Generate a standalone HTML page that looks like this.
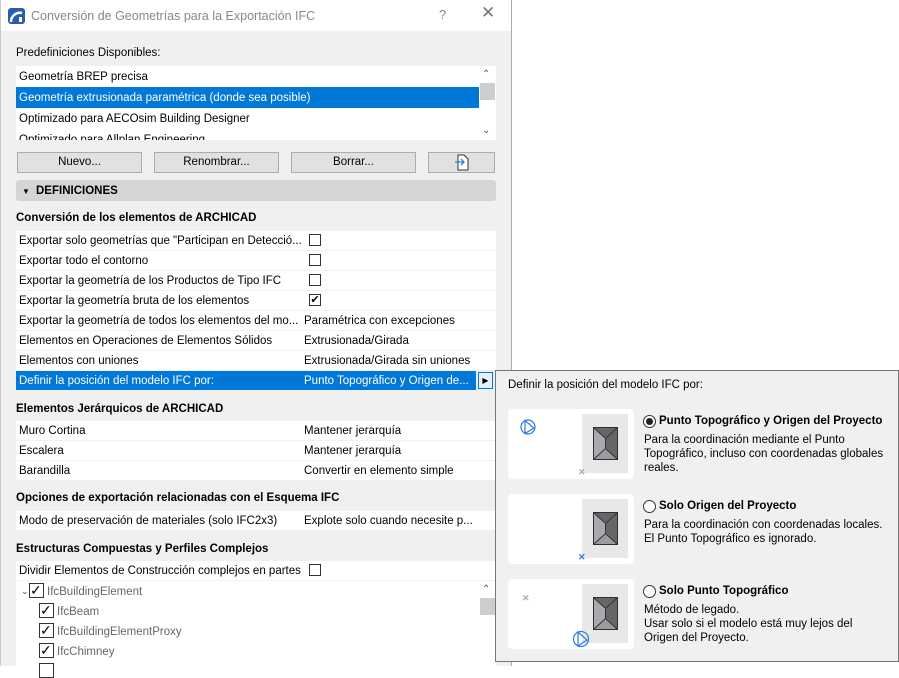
<!DOCTYPE html>
<html><head><meta charset="utf-8"><style>
*{margin:0;padding:0;box-sizing:border-box}
html,body{width:899px;height:666px}
body{background:#fff;font-family:"Liberation Sans",sans-serif;font-size:11.5px;color:#000;position:relative;overflow:hidden}
.a{position:absolute}
.dlg{left:0;top:0;width:512px;height:666px;background:#f0f0f0;border-right:1px solid #aaa;border-left:1px solid #ccc}
.t{position:absolute;white-space:nowrap;line-height:14px}
.b{font-weight:bold}
.row{position:absolute;left:16px;width:480px;height:20px;background:#fff;border-bottom:1px solid #f0f0f0}
.row span{position:absolute;top:4px;white-space:nowrap}
.row .v{left:288px}
.row .l{left:3px}
.cb{position:absolute;width:12px;height:12px;border:1px solid #333;background:#fff}
.btn{position:absolute;top:152px;height:21px;background:#e1e1e1;border:1px solid #adadad;text-align:center;line-height:19px}
.card{position:absolute;left:508px;width:126px;height:70px;background:#fff;border-radius:4px}
.gb{position:absolute;left:74px;top:5px;width:46px;height:59px;background:#e8e8e8}
.rad{position:absolute;width:13px;height:13px;border:1px solid #333;border-radius:50%;background:#fff}
.ifc{color:#666}
</style></head><body>
<div class="a dlg"></div>
<div class="a" style="left:1px;top:0;width:510px;height:31px;background:#fff"></div>
<svg class="a" style="left:8px;top:8px" width="17" height="16"><rect width="17" height="16" rx="3" fill="#2a5db0"/><path d="M3 14 A9 9 0 0 1 14 5" stroke="#fff" stroke-width="2.5" fill="none"/><rect x="11" y="9" width="3" height="5" fill="#fff"/></svg>
<div class="t" style="left:31px;top:9px;font-size:12.5px;color:#888">Conversión de Geometrías para la Exportación IFC</div>
<div class="t" style="left:439px;top:8px;font-size:13px;color:#888">?</div>
<div class="t" style="left:481px;top:6px;font-size:17px;color:#777">✕</div>
<div class="t" style="left:16px;top:46px">Predefiniciones Disponibles:</div>
<div class="a" style="left:16px;top:66px;width:480px;height:74px;background:#fff;overflow:hidden">
<div class="t" style="left:3px;top:4px">Geometría BREP precisa</div>
<div class="a" style="left:0;top:21px;width:463px;height:21px;background:#0078d7"></div>
<div class="t" style="left:3px;top:25px;color:#fff">Geometría extrusionada paramétrica (donde sea posible)</div>
<div class="t" style="left:3px;top:46px">Optimizado para AECOsim Building Designer</div>
<div class="t" style="left:3px;top:67px">Optimizado para Allplan Engineering</div>
<div class="a" style="left:464px;top:17px;width:15px;height:17px;background:#cdcdcd"></div>
<div class="t" style="left:466px;top:2px;font-size:10px;color:#555">⌃</div>
<div class="t" style="left:466px;top:58px;font-size:10px;color:#555">⌄</div>
</div>
<div class="btn" style="left:17px;width:125px">Nuevo...</div>
<div class="btn" style="left:154px;width:125px">Renombrar...</div>
<div class="btn" style="left:291px;width:125px">Borrar...</div>
<div class="btn" style="left:428px;width:67px"><svg width="16" height="17" style="margin-top:1px"><path d="M4 1h6l4 4v11H4z" fill="#fff" stroke="#333"/><path d="M1 8h9M7 5l3 3-3 3" stroke="#2a7de1" stroke-width="1.3" fill="none"/></svg></div>
<div class="a" style="left:16px;top:180px;width:480px;height:21px;background:#d5d5d5;border-radius:3px"></div>
<div class="t b" style="left:22px;top:185px;font-size:8px">▼</div>
<div class="t b" style="left:36px;top:184px">DEFINICIONES</div>
<div class="t b" style="left:16px;top:211px">Conversión de los elementos de ARCHICAD</div>
<div class="row" style="top:231px"><span class="l">Exportar solo geometrías que "Participan en Detecció...</span><div class="cb" style="left:293px;top:3px"></div></div>
<div class="row" style="top:251px"><span class="l">Exportar todo el contorno</span><div class="cb" style="left:293px;top:3px"></div></div>
<div class="row" style="top:271px"><span class="l">Exportar la geometría de los Productos de Tipo IFC</span><div class="cb" style="left:293px;top:3px"></div></div>
<div class="row" style="top:291px"><span class="l">Exportar la geometría bruta de los elementos</span><div class="cb" style="left:293px;top:3px;font-size:11px;line-height:10px;text-align:center">✔</div></div>
<div class="row" style="top:311px"><span class="l">Exportar la geometría de todos los elementos del mo...</span><span class="v">Paramétrica con excepciones</span></div>
<div class="row" style="top:331px"><span class="l">Elementos en Operaciones de Elementos Sólidos</span><span class="v">Extrusionada/Girada</span></div>
<div class="row" style="top:351px"><span class="l">Elementos con uniones</span><span class="v">Extrusionada/Girada sin uniones</span></div>
<div class="row" style="top:371px;background:#0078d7;width:460px;color:#fff"><span class="l">Definir la posición del modelo IFC por:</span><span class="v">Punto Topográfico y Origen de...</span></div>
<div class="a" style="left:478px;top:372px;width:15px;height:17px;background:#e5f1fb;border:1px solid #0078d7;font-size:8px;line-height:15px;text-align:center">▶</div>
<div class="t b" style="left:16px;top:402px">Elementos Jerárquicos de ARCHICAD</div>
<div class="row" style="top:421px"><span class="l">Muro Cortina</span><span class="v">Mantener jerarquía</span></div>
<div class="row" style="top:441px"><span class="l">Escalera</span><span class="v">Mantener jerarquía</span></div>
<div class="row" style="top:461px"><span class="l">Barandilla</span><span class="v">Convertir en elemento simple</span></div>
<div class="t b" style="left:16px;top:491px">Opciones de exportación relacionadas con el Esquema IFC</div>
<div class="row" style="top:511px"><span class="l">Modo de preservación de materiales (solo IFC2x3)</span><span class="v">Explote solo cuando necesite p...</span></div>
<div class="t b" style="left:16px;top:542px">Estructuras Compuestas y Perfiles Complejos</div>
<div class="row" style="top:561px"><span class="l">Dividir Elementos de Construcción complejos en partes</span><div class="cb" style="left:293px;top:3px"></div></div>
<div class="a" style="left:16px;top:581px;width:480px;height:85px;background:#fff"></div>
<div class="a" style="left:480px;top:598px;width:15px;height:17px;background:#cdcdcd"></div>
<div class="t" style="left:482px;top:583px;font-size:10px;color:#555">⌃</div>
<div class="t" style="left:21px;top:584px;font-size:9px;color:#555">⌄</div>
<div class="cb" style="left:29px;top:583px;width:15px;height:15px;font-size:14px;line-height:12px">✓</div><div class="t ifc" style="left:47px;top:585px">IfcBuildingElement</div>
<div class="cb" style="left:39px;top:603px;width:15px;height:15px;font-size:14px;line-height:12px">✓</div><div class="t ifc" style="left:57px;top:605px">IfcBeam</div>
<div class="cb" style="left:39px;top:623px;width:15px;height:15px;font-size:14px;line-height:12px">✓</div><div class="t ifc" style="left:57px;top:625px">IfcBuildingElementProxy</div>
<div class="cb" style="left:39px;top:643px;width:15px;height:15px;font-size:14px;line-height:12px">✓</div><div class="t ifc" style="left:57px;top:645px">IfcChimney</div>
<div class="cb" style="left:39px;top:663px;width:15px;height:15px"></div>

<div class="a" style="left:495px;top:370px;width:404px;height:292px;background:#f0f0f0;border:1px solid #777"></div>
<div class="t" style="left:508px;top:378px">Definir la posición del modelo IFC por:</div>

<div class="card" style="top:409px"><div class="gb"></div>
<svg class="a" style="left:85px;top:18px" width="25" height="33"><rect x="0.5" y="0.5" width="24" height="32" fill="#666"/><path d="M1 1L12 11V22L1 32z" fill="#aaaaae"/><path d="M1 32L12 22H13L24 32z" fill="#9c9ca0"/><path d="M1 1L12 11M24 1L13 11M1 32L12 22M24 32L13 22M12.5 11V22" stroke="#333" fill="none"/><rect x="0.5" y="0.5" width="24" height="32" fill="none" stroke="#2b2f33"/></svg>
<svg class="a" style="left:12px;top:10px" width="16" height="16"><circle cx="8" cy="8" r="7" fill="none" stroke="#2a7de1" stroke-width="1.2"/><path d="M5 1.5v13L14 9z" fill="none" stroke="#2a7de1" stroke-width="1.2"/></svg>
<div class="t" style="left:70px;top:56px;font-size:9px;color:#aaa;font-weight:bold">✕</div></div>
<div class="rad" style="left:643px;top:415px"><div style="margin:2px;width:7px;height:7px;border-radius:50%;background:#222"></div></div>
<div class="t b" style="left:659px;top:414px">Punto Topográfico y Origen del Proyecto</div>
<div class="t" style="left:644px;top:433px">Para la coordinación mediante el Punto<br>Topográfico, incluso con coordenadas globales<br>reales.</div>

<div class="card" style="top:494px"><div class="gb"></div>
<svg class="a" style="left:85px;top:18px" width="25" height="33"><rect x="0.5" y="0.5" width="24" height="32" fill="#666"/><path d="M1 1L12 11V22L1 32z" fill="#aaaaae"/><path d="M1 32L12 22H13L24 32z" fill="#9c9ca0"/><path d="M1 1L12 11M24 1L13 11M1 32L12 22M24 32L13 22M12.5 11V22" stroke="#333" fill="none"/><rect x="0.5" y="0.5" width="24" height="32" fill="none" stroke="#2b2f33"/></svg>
<div class="t" style="left:70px;top:56px;font-size:9px;color:#2a7de1;font-weight:bold">✕</div></div>
<div class="rad" style="left:643px;top:500px"></div>
<div class="t b" style="left:659px;top:499px">Solo Origen del Proyecto</div>
<div class="t" style="left:644px;top:518px">Para la coordinación con coordenadas locales.<br>El Punto Topográfico es ignorado.</div>

<div class="card" style="top:579px"><div class="gb"></div>
<svg class="a" style="left:85px;top:18px" width="25" height="33"><rect x="0.5" y="0.5" width="24" height="32" fill="#666"/><path d="M1 1L12 11V22L1 32z" fill="#aaaaae"/><path d="M1 32L12 22H13L24 32z" fill="#9c9ca0"/><path d="M1 1L12 11M24 1L13 11M1 32L12 22M24 32L13 22M12.5 11V22" stroke="#333" fill="none"/><rect x="0.5" y="0.5" width="24" height="32" fill="none" stroke="#2b2f33"/></svg>
<svg class="a" style="left:64px;top:51px" width="18" height="18"><circle cx="9" cy="9" r="7.5" fill="none" stroke="#2a7de1" stroke-width="1.2"/><path d="M6 2v14L15 10z" fill="none" stroke="#2a7de1" stroke-width="1.2"/></svg>
<div class="t" style="left:14px;top:12px;font-size:9px;color:#aaa;font-weight:bold">✕</div></div>
<div class="rad" style="left:643px;top:585px"></div>
<div class="t b" style="left:659px;top:584px">Solo Punto Topográfico</div>
<div class="t" style="left:644px;top:603px">Método de legado.<br>Usar solo si el modelo está muy lejos del<br>Origen del Proyecto.</div>
</body></html>
